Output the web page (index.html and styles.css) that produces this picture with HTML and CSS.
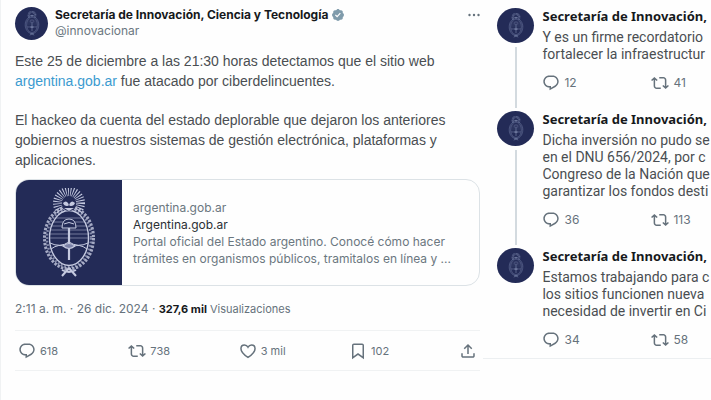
FILE: index.html
```html
<!DOCTYPE html>
<html lang="es">
<head>
    <meta charset="UTF-8">
    <meta name="viewport" content="width=device-width, initial-scale=1">
    <title>Secretaría de Innovación, Ciencia y Tecnología</title>
    <link rel="stylesheet" href="styles.css">
</head>
<body>

<!-- shared icons -->
<svg class="sprite" aria-hidden="true">
    <symbol id="reply" viewBox="0 0 24 24">
        <path d="M1.751 10c0-4.42 3.584-8 8.005-8h4.366c4.49 0 8.129 3.64 8.129 8.13 0 2.96-1.607 5.68-4.196 7.11l-8.054 4.46v-3.69h-.067c-4.49.1-8.183-3.51-8.183-8.01zm8.005-6c-3.317 0-6.005 2.69-6.005 6 0 3.37 2.77 6.08 6.138 6.01l.351-.01h1.761v2.3l5.087-2.81c1.951-1.08 3.163-3.13 3.163-5.36 0-3.39-2.744-6.13-6.129-6.13H9.756z"/>
    </symbol>
    <symbol id="repost" viewBox="0 0 24 24">
        <path d="M4.5 3.88l4.432 4.14-1.364 1.46L5.5 7.55V16c0 1.1.896 2 2 2H13v2H7.5c-2.209 0-4-1.79-4-4V7.55L1.432 9.48.068 8.02 4.5 3.88zM16.5 6H11V4h5.5c2.209 0 4 1.79 4 4v8.45l2.068-1.93 1.364 1.46-4.432 4.14-4.432-4.14 1.364-1.46 2.068 1.93V8c0-1.1-.896-2-2-2z"/>
    </symbol>
    <symbol id="like" viewBox="0 0 24 24">
        <path fill="none" stroke="currentColor" stroke-width="2" d="M12 20.5C6 16.5 2.6 12.6 2.6 8.9 2.6 6 4.8 4 7.3 4c2 0 3.6 1 4.7 2.9C13.1 5 14.7 4 16.7 4c2.5 0 4.7 2 4.7 4.9 0 3.7-3.4 7.6-9.4 11.6z"/>
    </symbol>
    <symbol id="save" viewBox="0 0 24 24">
        <path d="M4 4.5C4 3.12 5.119 2 6.5 2h11C18.881 2 20 3.12 20 4.5v18.44l-8-5.71-8 5.71V4.5zM6.5 4c-.276 0-.5.22-.5.5v14.56l6-4.29 6 4.29V4.5c0-.28-.224-.5-.5-.5h-11z"/>
    </symbol>
    <symbol id="share" viewBox="0 0 24 24">
        <path d="M12 2.59l5.7 5.7-1.41 1.42L13 6.41V16h-2V6.41l-3.3 3.3-1.41-1.42L12 2.59zM21 15l-.02 3.51c0 1.38-1.12 2.49-2.5 2.49H5.5C4.11 21 3 19.88 3 18.5V15h2v3.5c0 .28.22.5.5.5h12.98c.28 0 .5-.22.5-.5L19 15h2z"/>
    </symbol>
    <!-- coat of arms -->
    <symbol id="crest" viewBox="0 0 56 90">
        <g fill="none" stroke="currentColor">
            <circle cx="28" cy="15" r="11.5" stroke-width="9" stroke-dasharray="0.9 1.4"/>
            <ellipse cx="28" cy="50" rx="21" ry="29" fill="#232b57" stroke="none"/>
            <ellipse cx="28" cy="50" rx="24.5" ry="31" stroke-width="3" stroke-dasharray="2.4 1.4" opacity=".8"/>
            <ellipse cx="28" cy="50" rx="22" ry="29" stroke-width="2.4" stroke-dasharray="1.8 1.8" opacity=".6"/>
            <ellipse cx="28" cy="50" rx="19.5" ry="27.5" fill="#232b57" stroke-width="1.4"/>
            <path stroke-width=".7" opacity=".7" d="M15 30h26M12 34h32M10 38h36M9 42h38M9 46h38M9 50h38"/>
            <path stroke-width="1" d="M9 55q10 5 19-1q9 6 19 1M10 61q8-6 15-2M46 61q-8-6-15-2"/>
            <path stroke-width="2.2" d="M28 40v32"/>
            <path stroke-width="1" fill="#232b57" d="M21 40q0-9 7-9t7 9zM23 36q5-3 10 0"/>
            <path stroke-width="1.2" fill="#7b82a8" d="M22 58q6-5 12 0q-6 5-12 0z"/>
            <path stroke-width="2" d="M28 80l-7 8M28 80l7 8M21 82q7 4 14 0"/>
        </g>
        <circle cx="28" cy="16" r="7" fill="#232b57"/>
        <path fill="currentColor" d="M22 15q3-3 5 0t-1 3q-3 0-4-3zM34 15q-3-3-5 0t1 3q3 0 4-3zM23 20h10l-5 3z"/>
    </symbol>
</svg>

<div class="page">
    <main class="post">
        <header class="post-head">
            <span class="avatar"><svg><use href="#crest"/></svg></span>
            <div class="author">
                <div class="name">
                    Secretaría de Innovación, Ciencia y Tecnología
                    <svg class="badge" viewBox="0 0 22 22"><path d="M20.396 11c-.018-.646-.215-1.275-.57-1.816-.354-.54-.852-.972-1.438-1.246.223-.607.27-1.264.14-1.897-.131-.634-.437-1.218-.882-1.687-.47-.445-1.053-.75-1.687-.882-.633-.13-1.29-.083-1.897.14-.273-.587-.704-1.086-1.245-1.44S11.647 1.62 11 1.604c-.646.017-1.273.213-1.813.568s-.969.854-1.24 1.44c-.608-.223-1.267-.272-1.902-.14-.635.13-1.22.436-1.69.882-.445.47-.749 1.055-.878 1.688-.13.633-.08 1.29.144 1.896-.587.274-1.087.705-1.443 1.245-.356.54-.555 1.17-.574 1.817.02.647.218 1.276.574 1.817.356.54.856.972 1.443 1.245-.224.606-.274 1.263-.144 1.896.13.634.433 1.218.877 1.688.47.443 1.054.747 1.687.878.633.132 1.29.084 1.897-.136.274.586.705 1.084 1.246 1.439.54.354 1.17.551 1.816.569.647-.016 1.276-.213 1.817-.567s.972-.854 1.245-1.44c.604.239 1.266.296 1.903.164.636-.132 1.22-.447 1.68-.907.46-.46.776-1.044.908-1.681s.075-1.299-.165-1.903c.586-.274 1.084-.705 1.439-1.246.354-.54.551-1.17.569-1.816zM9.662 14.85l-3.429-3.428 1.293-1.302 2.072 2.072 4.4-4.794 1.347 1.246z"/></svg>
                </div>
                <div class="handle">@innovacionar</div>
            </div>
            <button class="more" aria-label="Más opciones"><svg viewBox="0 0 12 4"><circle cx="1.5" cy="2" r="1.2"/><circle cx="6" cy="2" r="1.2"/><circle cx="10.5" cy="2" r="1.2"/></svg></button>
        </header>

        <div class="post-text">
            <p>Este 25 de diciembre a las 21:30 horas detectamos que el sitio web<br><a href="#">argentina.gob.ar</a> fue atacado por ciberdelincuentes.</p>
            <p>El hackeo da cuenta del estado deplorable que dejaron los anteriores<br>gobiernos a nuestros sistemas de gestión electrónica, plataformas y<br>aplicaciones.</p>
        </div>

        <a class="card" href="#">
            <span class="card-img"><svg><use href="#crest"/></svg></span>
            <span class="card-text">
                <span>argentina.gob.ar</span>
                <span class="card-title">Argentina.gob.ar</span>
                <span>Portal oficial del Estado argentino. Conocé cómo hacer<br>trámites en organismos públicos, tramitalos en línea y ...</span>
            </span>
        </a>

        <div class="meta">2:11 a. m. · 26 dic. 2024 · <span class="views"><b>327,6 mil</b> Visualizaciones</span></div>

        <div class="actions">
            <button><svg><use href="#reply"/></svg>618</button>
            <button><svg><use href="#repost"/></svg>738</button>
            <button><svg><use href="#like"/></svg>3 mil</button>
            <button><svg><use href="#save"/></svg>102</button>
            <button aria-label="Compartir"><svg><use href="#share"/></svg></button>
        </div>
    </main>

    <section class="thread">
        <article class="reply">
            <div class="side"><span class="avatar"><svg><use href="#crest"/></svg></span></div>
            <div class="reply-body">
                <div class="name">Secretaría de Innovación,</div>
                <p>Y es un firme recordatorio<br>fortalecer la infraestructur</p>
                <div class="reply-actions">
                    <button><svg><use href="#reply"/></svg>12</button>
                    <button><svg><use href="#repost"/></svg>41</button>
                </div>
            </div>
        </article>
        <article class="reply">
            <div class="side"><span class="avatar"><svg><use href="#crest"/></svg></span></div>
            <div class="reply-body">
                <div class="name">Secretaría de Innovación,</div>
                <p>Dicha inversión no pudo se<br>en el DNU 656/2024, por c<br>Congreso de la Nación que<br>garantizar los fondos desti</p>
                <div class="reply-actions">
                    <button><svg><use href="#reply"/></svg>36</button>
                    <button><svg><use href="#repost"/></svg>113</button>
                </div>
            </div>
        </article>
        <article class="reply">
            <div class="side"><span class="avatar"><svg><use href="#crest"/></svg></span></div>
            <div class="reply-body">
                <div class="name">Secretaría de Innovación,</div>
                <p>Estamos trabajando para c<br>los sitios funcionen nueva<br>necesidad de invertir en Ci</p>
                <div class="reply-actions">
                    <button><svg><use href="#reply"/></svg>34</button>
                    <button><svg><use href="#repost"/></svg>58</button>
                </div>
            </div>
        </article>
    </section>
</div>

</body>
</html>
```
FILE: styles.css
```css
* {
    box-sizing: border-box;
    margin: 0;
    padding: 0;
}

body {
    background-color: #fefefe;
    color: #4a4e52;
    font-family: Inter, "Liberation Sans", sans-serif;
    overflow-x: hidden;
}

a {
    color: #3b9bd0;
    text-decoration: none;
}

button {
    display: flex;
    align-items: center;
    gap: 4px;
    border: none;
    background: none;
    color: #66727c;
    font-family: inherit;
    font-size: 11px;
    line-height: 18px;
    cursor: pointer;
}

button svg {
    width: 18px;
    height: 18px;
    fill: currentColor;
}

.sprite {
    position: absolute;
    width: 0;
    height: 0;
}

.page {
    display: grid;
    grid-template-columns: 68% 1fr;
    align-items: start;
}

.name {
    color: #16191c;
    font-weight: 700;
    white-space: nowrap;
}

.avatar {
    display: flex;
    align-items: center;
    justify-content: center;
    flex: none;
    border-radius: 50%;
    background-color: #232b57;
    color: #7f8bb0;
}

.avatar svg {
    width: 18px;
    height: 25px;
}

/* main post */
.post {
    min-height: 100vh;
    padding: 7px 3px 0 14px;
    border-left: 1px solid #f0f2f3;
}

.post-head {
    display: flex;
    gap: 7px;
}

.post-head .avatar {
    width: 33px;
    height: 33px;
}

.author {
    flex: 1;
    font-size: 12px;
    line-height: 16px;
}

.author .name {
    display: flex;
    align-items: center;
    gap: 3px;
}

.badge {
    width: 14px;
    height: 14px;
    fill: #7f9bab;
}

.handle {
    color: #6b7780;
}

.more {
    align-self: flex-start;
    height: 16px;
}

.more svg {
    width: 12px;
    height: 4px;
}

.post-text {
    margin-top: 11px;
    font-family: "Liberation Sans", sans-serif;
    font-size: 14px;
    line-height: 20px;
    white-space: nowrap;
}

.post-text p + p {
    margin-top: 19px;
}

.card {
    display: flex;
    margin-top: 9px;
    border: 1px solid #dce2e6;
    border-radius: 14px;
    overflow: hidden;
    color: #6b7780;
    font-size: 12px;
    line-height: 17px;
}

.card-img {
    display: flex;
    align-items: center;
    justify-content: center;
    width: 106px;
    height: 105px;
    background-color: #232b57;
    color: #c5cae0;
}

.card-img svg {
    width: 56px;
    height: 90px;
}

.card-text {
    display: flex;
    flex-direction: column;
    justify-content: center;
    padding-left: 11px;
    white-space: nowrap;
}

.card-title {
    color: #2b3035;
}

.meta {
    margin-top: 13px;
    color: #66727c;
    font-size: 12px;
    line-height: 20px;
}

.views {
    font-size: 11px;
}

.meta b {
    color: #16191c;
}

.actions {
    display: grid;
    grid-template-columns: repeat(4, 1fr) auto;
    margin-top: 11px;
    padding: 11px 3px 10px;
    border-top: 1px solid #f0f2f3;
    border-bottom: 1px solid #f0f2f3;
}

/* replies on the right */
.thread {
    overflow: hidden;
    padding: 8px 0 9px 14px;
    border-bottom: 1px solid #eceff1;
}

.reply {
    display: flex;
    gap: 8px;
}

.side {
    display: flex;
    flex-direction: column;
    align-items: center;
    gap: 4px;
}

.side .avatar {
    width: 37px;
    height: 35px;
}

.reply:not(:last-child) .side::after {
    content: "";
    flex: 1;
    width: 2px;
    margin-bottom: 3px;
    background-color: #d3dadf;
}

.reply-body {
    padding-bottom: 19px;
    font-family: Roboto, sans-serif;
    font-size: 14px;
    line-height: 17px;
    white-space: nowrap;
}

.reply:last-child .reply-body {
    padding-bottom: 0;
}

.reply-body .name {
    font-family: "Noto Sans", sans-serif;
    font-size: 13px;
}

.reply-body p {
    margin-top: 4px;
}

.reply-actions {
    display: grid;
    grid-template-columns: 109px auto;
    margin-top: 11px;
    font-family: Inter, sans-serif;
}

.reply-actions button {
    font-size: 12px;
}
```
